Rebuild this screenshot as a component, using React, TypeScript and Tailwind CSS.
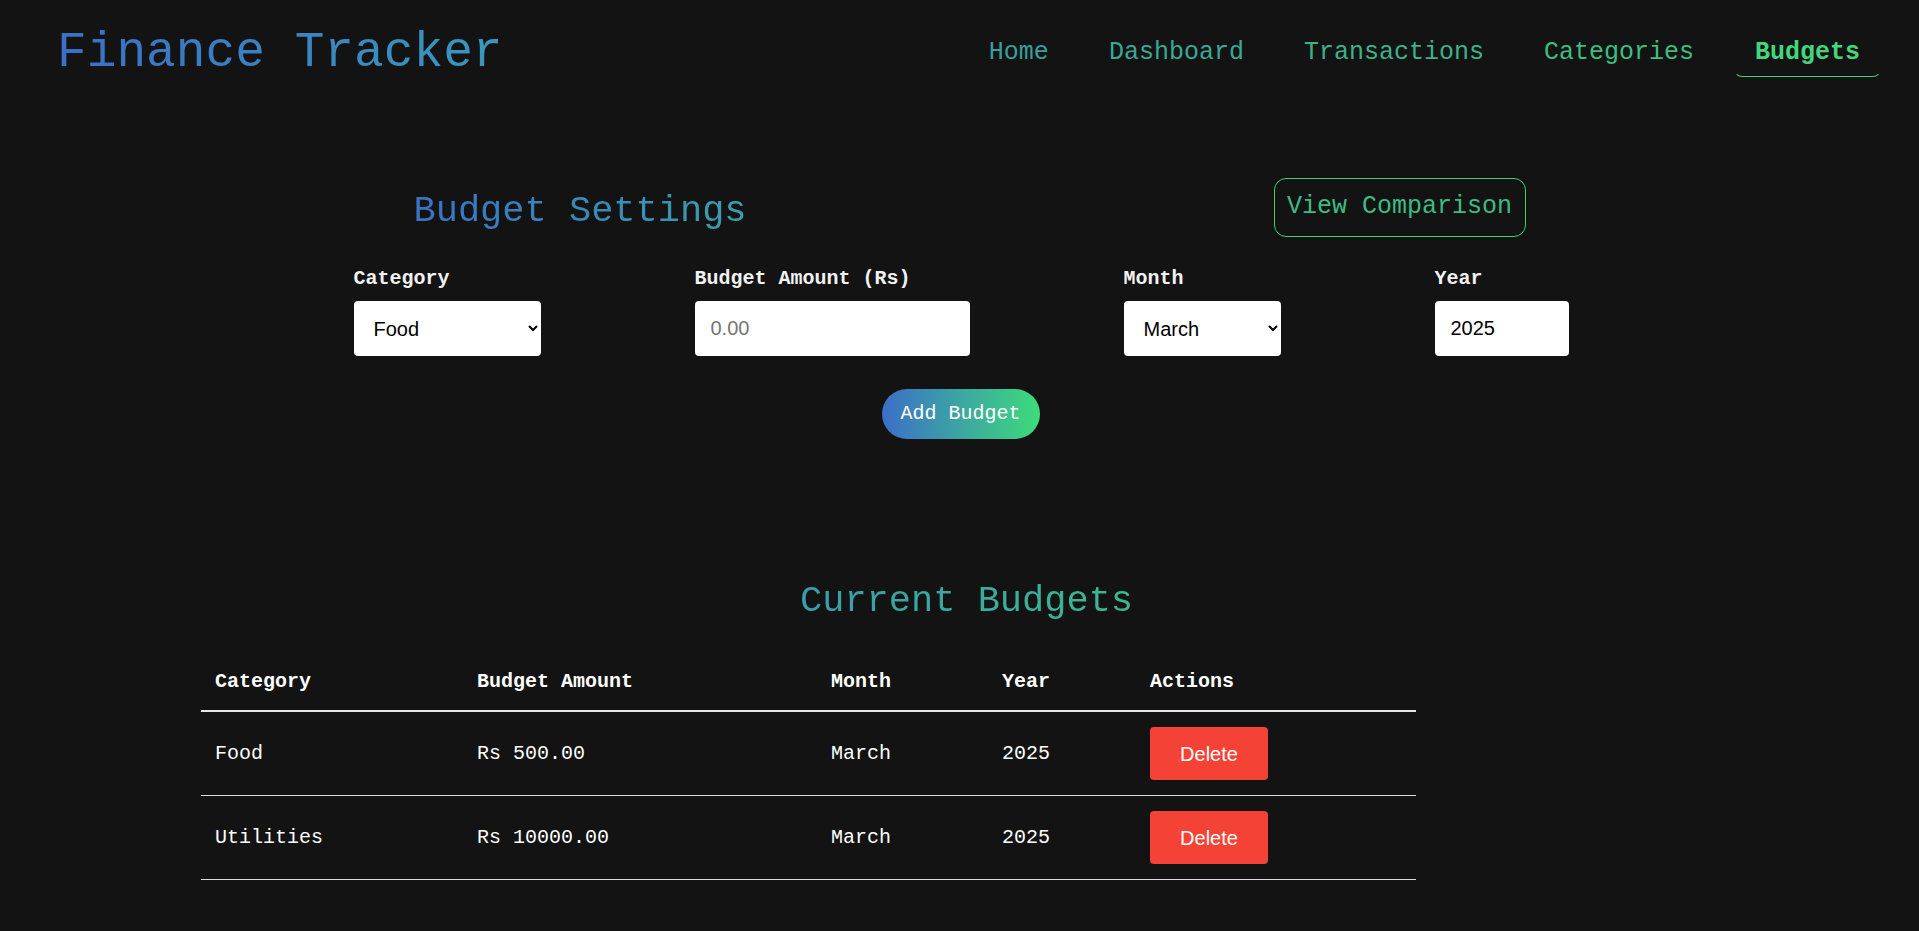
const navLinks = [
  { label: "Home", color: "text-[#3a9e9c]" },
  { label: "Dashboard", color: "text-[#3aa893]" },
  { label: "Transactions", color: "text-[#3cb289]" },
  { label: "Categories", color: "text-[#3dbd80]" },
];

const budgets = [
  { category: "Food", amount: "Rs 500.00", month: "March", year: "2025" },
  { category: "Utilities", amount: "Rs 10000.00", month: "March", year: "2025" },
];

const mono = "font-['Liberation_Mono',_'DejaVu_Sans_Mono',monospace]";
const arial = "font-['Liberation_Sans',Arial,sans-serif]";

export default function App() {
  return (
    <div className={`min-h-[931px] bg-[#131313] text-white ${mono}`}>
      {/* header */}
      <header className="flex h-[78px] items-start justify-between pl-[57px] pr-[38px] pt-[23px]">
        <h1 className="mt-[3px] bg-[linear-gradient(90deg,#3b6fc8,#3a98bc)] bg-clip-text text-[49.5px] leading-[55px] text-transparent">
          Finance Tracker
        </h1>
        <nav className="flex items-start gap-5">
          {navLinks.map((l) => (
            <a key={l.label} className={`px-5 pb-[9px] pt-[15px] text-[25px] leading-[30px] ${l.color}`}>
              {l.label}
            </a>
          ))}
          <a className="rounded-lg border border-transparent border-b-[#3ecf78] px-5 pb-[8px] pt-[14px] text-[25px] font-bold leading-[30px] text-[#42d77d]">
            Budgets
          </a>
        </nav>
      </header>

      {/* budget form */}
      <section className="mx-auto mt-[100px] w-[1216px] pl-[2px]">
        <div className="flex h-[58px] items-center justify-between pl-[60px] pr-[42px]">
          <h2 className="pt-[7px] bg-[linear-gradient(90deg,#3a72c3,#3a9fac)] bg-clip-text text-[37px] leading-[44px] text-transparent">
            Budget Settings
          </h2>
          <button className="h-[59px] w-[252px] rounded-xl border border-[#3ecf6f] text-[25px] text-[#3dbb84]">
            View Comparison
          </button>
        </div>

        <div className="mt-[31px] flex gap-[154px]">
          <div className="flex flex-col gap-[10px]">
            <label className="text-[20px] font-bold leading-6 text-[#f2f2f2]">Category</label>
            <select
              defaultValue="Food"
              className={`h-[55px] w-[187px] rounded bg-white px-4 text-[20px] text-black ${arial}`}
            >
              <option>Food</option>
              <option>Utilities</option>
              <option>Transport</option>
            </select>
          </div>
          <div className="flex flex-col gap-[10px]">
            <label className="text-[20px] font-bold leading-6 text-[#f2f2f2]">Budget Amount (Rs)</label>
            <input
              placeholder="0.00"
              className={`h-[55px] w-[275px] rounded bg-white px-4 text-[20px] text-black placeholder:text-[#767676] ${arial}`}
            />
          </div>
          <div className="flex flex-col gap-[10px]">
            <label className="text-[20px] font-bold leading-6 text-[#f2f2f2]">Month</label>
            <select
              defaultValue="March"
              className={`h-[55px] w-[157px] rounded bg-white px-4 text-[20px] text-black ${arial}`}
            >
              <option>January</option>
              <option>February</option>
              <option>March</option>
              <option>April</option>
            </select>
          </div>
          <div className="flex flex-col gap-[10px]">
            <label className="text-[20px] font-bold leading-6 text-[#f2f2f2]">Year</label>
            <input
              defaultValue="2025"
              className={`h-[55px] w-[134px] rounded bg-white px-4 text-[20px] text-black ${arial}`}
            />
          </div>
        </div>

        <div className="mt-[33px] flex justify-center">
          <button className="h-[50px] w-[158px] rounded-full bg-[linear-gradient(90deg,#3b6fc8,#3ddc7a)] text-[20px] text-white">
            Add Budget
          </button>
        </div>
      </section>

      {/* current budgets */}
      <section className="mt-[140px] pb-[52px]">
        <h2 className="ml-[800px] w-fit bg-[linear-gradient(90deg,#3a9da9,#3db890)] bg-clip-text text-[37px] leading-[44px] text-transparent">
          Current Budgets
        </h2>
        <div className="ml-[201px] mt-[27px] w-[1215px]">
          <div className="grid grid-cols-[262px_354px_171px_148px_280px] border-b-2 border-[#e6e6e6] pb-[16px] pt-[20px] text-[20px] font-bold leading-6">
            <div className="pl-[14px]">Category</div>
            <div className="pl-[14px]">Budget Amount</div>
            <div className="pl-[14px]">Month</div>
            <div className="pl-[14px]">Year</div>
            <div className="pl-[14px]">Actions</div>
          </div>
          {budgets.map((b) => (
            <div
              key={b.category}
              className="grid grid-cols-[262px_354px_171px_148px_280px] items-center border-b border-[#dcdcdc] py-[15px] text-[20px] leading-6"
            >
              <div className="pl-[14px]">{b.category}</div>
              <div className="pl-[14px]">{b.amount}</div>
              <div className="pl-[14px]">{b.month}</div>
              <div className="pl-[14px]">{b.year}</div>
              <div className="pl-[14px]">
                <button className={`h-[53px] w-[118px] rounded bg-[#f44336] text-[20px] text-white ${arial}`}>
                  Delete
                </button>
              </div>
            </div>
          ))}
        </div>
      </section>
    </div>
  );
}
